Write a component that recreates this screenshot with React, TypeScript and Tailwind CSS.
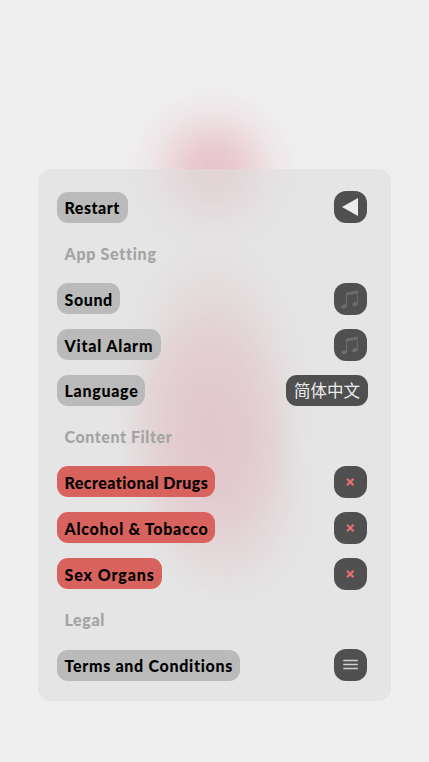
import type { ReactNode } from "react";

type Tone = "gray" | "red" | "heading";

interface Row {
  label: string;
  tone: Tone;
  fit: string;
  control?: ReactNode;
}

const tones: Record<Tone, string> = {
  gray: "bg-[#bababa] text-black",
  red: "bg-[#d8625e] text-black",
  heading: "text-[#a3a3a3]",
};

function IconButton({ children, label }: { children: ReactNode; label: string }) {
  return (
    <button
      aria-label={label}
      className="flex h-8 w-[33px] items-center justify-center rounded-[12px] bg-[#505050]"
    >
      {children}
    </button>
  );
}

function Back() {
  return (
    <IconButton label="Restart">
      <svg width="33" height="32" viewBox="0 0 33 32">
        <path d="M8 16 24 7v18Z" fill="#ededed" />
      </svg>
    </IconButton>
  );
}

function Music() {
  return (
    <IconButton label="Toggle">
      <svg width="33" height="32" viewBox="0 0 33 32" fill="#6d6d6d">
        <path d="M12 9.8 23.8 7.6v2.6L12 12.4Z" />
        <path d="M12.5 10v13M23.3 8v13" stroke="#6d6d6d" strokeWidth="1" />
        <ellipse cx="10.2" cy="23.4" rx="2.8" ry="2" transform="rotate(-18 10.2 23.4)" />
        <ellipse cx="21" cy="21.2" rx="2.8" ry="2" transform="rotate(-18 21 21.2)" />
      </svg>
    </IconButton>
  );
}

function Cross() {
  return (
    <IconButton label="Off">
      <svg width="33" height="32" viewBox="0 0 33 32">
        <path d="m13 12.8 6.6 6.4m0-6.4L13 19.2" stroke="#e66f6d" strokeWidth="2.2" />
      </svg>
    </IconButton>
  );
}

function Menu() {
  return (
    <IconButton label="Open">
      <svg width="33" height="32" viewBox="0 0 33 32">
        <path d="M9.3 11.5h14.5M9.3 15.5h14.5M9.3 19.5h14.5" stroke="#d0d0d0" strokeWidth="1.4" />
      </svg>
    </IconButton>
  );
}

function Language() {
  return (
    <button className="-mr-px flex h-[31px] w-[82px] items-center justify-center rounded-[11px] bg-[#505050] font-['Noto_Sans_CJK_SC',sans-serif] text-[16.5px] leading-none text-[#ededed]">
      简体中文
    </button>
  );
}

const rows: Row[] = [
  { label: "Restart", tone: "gray", fit: "w-[71px] tracking-[0.5px]", control: <Back /> },
  { label: "App Setting", tone: "heading", fit: "tracking-[0.7px]" },
  { label: "Sound", tone: "gray", fit: "w-[63px] tracking-[0.6px]", control: <Music /> },
  { label: "Vital Alarm", tone: "gray", fit: "w-[103.5px] tracking-[0.8px]", control: <Music /> },
  { label: "Language", tone: "gray", fit: "w-[88px] tracking-[0.7px]", control: <Language /> },
  { label: "Content Filter", tone: "heading", fit: "tracking-[0.57px]" },
  { label: "Recreational Drugs", tone: "red", fit: "w-[158px] tracking-[0.43px]", control: <Cross /> },
  { label: "Alcohol & Tobacco", tone: "red", fit: "w-[158px] tracking-[0.7px]", control: <Cross /> },
  { label: "Sex Organs", tone: "red", fit: "w-[105px] tracking-[0.9px]", control: <Cross /> },
  { label: "Legal", tone: "heading", fit: "tracking-[0.6px]" },
  { label: "Terms and Conditions", tone: "gray", fit: "w-[183px] tracking-[0.7px]", control: <Menu /> },
];

export default function App() {
  return (
    <div className="flex h-[762px] w-full flex-col items-center overflow-hidden bg-[#efefef] bg-[radial-gradient(88px_86px_at_213px_170px,#e8c3cb_0%,#e9cad1_25%,#ecdadd_50%,#eee6e8_70%,#efefef00_100%),radial-gradient(90px_120px_at_205px_430px,#e69daa88_0%,#e69daa55_45%,#e69daa00_100%),radial-gradient(85px_105px_at_232px_500px,#e69daa66_0%,#e69daa44_45%,#e69daa00_100%),radial-gradient(100px_185px_at_213px_415px,#e8a6b0cc_0%,#e8a9b2b8_35%,#e8a9b270_60%,#e8a9b225_82%,#e8a9b200_100%)] pt-[169px]">
      <main className="flex h-[532px] w-[353px] flex-col rounded-[13px] bg-[#dddddd]/60 pt-[15.2px] pr-[24px] pb-[12.8px] pl-[19px]">
        {rows.map((row) => (
          <div key={row.label} className="flex flex-1 items-center justify-between">
            <div
              className={`flex h-[31px] items-center whitespace-nowrap rounded-[11px] pl-[7.5px] pt-[2px] font-['Lato',sans-serif] text-[16px] font-black leading-none ${tones[row.tone]} ${row.fit}`}
            >
              {row.label}
            </div>
            {row.control}
          </div>
        ))}
      </main>
    </div>
  );
}
